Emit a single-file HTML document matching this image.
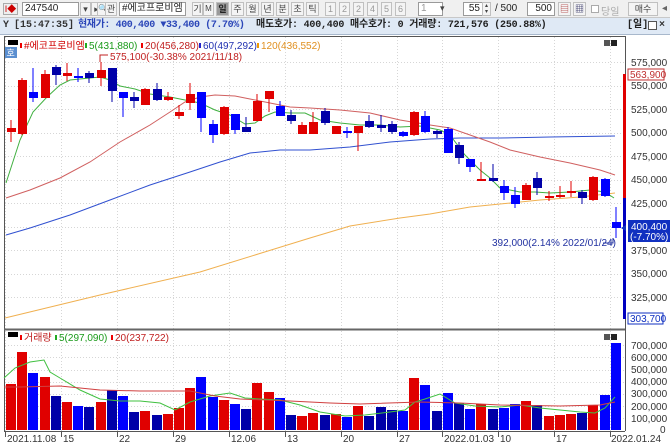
<!DOCTYPE html>
<html><head><meta charset="utf-8">
<style>
*{margin:0;padding:0;box-sizing:border-box}
body{width:670px;height:446px;overflow:hidden;background:#fff;font-family:"Liberation Sans","Noto Sans CJK KR",sans-serif;position:relative}
.a{position:absolute;white-space:nowrap}
#tb{position:absolute;left:0;top:0;width:670px;height:18px;background:#f0f0f0;border-bottom:1px solid #c8c8c8}
#st{position:absolute;left:0;top:18px;width:670px;height:17px;background:#dfe9f5;border-bottom:1px solid #a8b8cc;font-family:"Liberation Mono","Noto Sans CJK KR",monospace;font-size:10px;font-weight:bold;line-height:16px}
.box{position:absolute;top:2px;height:14px;background:#fff;border:1px solid #9a9a9a;font-size:10px;line-height:12px;padding-left:2px;color:#222}
.btn{position:absolute;top:2px;height:14px;width:11px;border:1px solid #c0c0c0;background:#f4f4f4;font-size:9px;line-height:12px;text-align:center;color:#444}
svg text{font-family:"Liberation Sans","Noto Sans CJK KR",sans-serif}
</style></head><body>
<div id="tb">
 <div class="a" style="left:3px;top:3px;width:15px;height:12px;border:1px solid #aaa;background:#eee;font-size:9px;line-height:10px;text-align:center;color:#c00">I◆</div>
 <div class="box" style="left:22px;width:57px">247540</div>
 <div class="btn" style="left:80px">▾</div>
 <div class="btn" style="left:91px">▸</div>
 <div class="btn" style="left:97px;width:9px;font-size:8px">🔍</div>
 <div class="btn" style="left:105px;width:12px">관</div>
 <div class="box" style="left:119px;width:67px">#에코프로비엠</div>
 <div class="btn" style="left:192px">기</div>
 <div class="btn" style="left:203px;font-size:8px">M</div>
 <div class="btn" style="left:216px;width:13px;background:#9a9a9a;color:#222;font-weight:bold">일</div>
 <div class="btn" style="left:231px;width:13px">주</div>
 <div class="btn" style="left:246px;width:13px">월</div>
 <div class="btn" style="left:261px;width:13px">년</div>
 <div class="btn" style="left:276px;width:13px">분</div>
 <div class="btn" style="left:291px;width:13px">초</div>
 <div class="btn" style="left:306px;width:13px">틱</div>
 <div class="btn" style="left:325px;color:#999">1</div>
 <div class="btn" style="left:339px;color:#999">2</div>
 <div class="btn" style="left:353px;color:#999">2</div>
 <div class="btn" style="left:367px;color:#999">4</div>
 <div class="btn" style="left:381px;color:#999">5</div>
 <div class="btn" style="left:395px;color:#999">6</div>
 <div class="box" style="left:418px;width:25px;color:#999">1</div>
 <div class="a" style="left:440px;top:3px;font-size:9px;color:#444">▾</div>
 <div class="box" style="left:463px;width:20px;text-align:right;padding-right:2px">55</div>
 <div class="btn" style="left:482px;width:9px;font-size:6px;line-height:6px">▴<br>▾</div>
 <div class="a" style="left:495px;top:3px;font-size:10px;color:#222">/ 500</div>
 <div class="box" style="left:527px;width:28px;text-align:right;padding-right:2px">500</div>
 <div class="btn" style="left:558px;width:13px;color:#a33">▤</div>
 <div class="btn" style="left:573px;width:13px;color:#336">▦</div>
 <div class="a" style="left:591px;top:5px;width:8px;height:8px;border:1px solid #aaa;background:#fff"></div>
 <div class="a" style="left:601px;top:3px;font-size:10px;color:#aaa">당일</div>
 <div class="btn" style="left:628px;width:30px">매수</div>
 <div class="a" style="left:662px;top:3px;font-size:10px;color:#666">◂</div>
</div>
<div id="st">
 <span class="a" style="left:3px;color:#333">Y</span>
 <span class="a" style="left:14px;color:#333">[15:47:35]</span>
 <span class="a" style="left:78px;color:#2b46b8;letter-spacing:-0.4px">현재가: 400,400 ▼33,400 (7.70%)</span>
 <span class="a" style="left:256px;color:#222;letter-spacing:-0.2px">매도호가: 400,400 매수호가: 0 거래량: 721,576 (250.88%)</span>
 <span class="a" style="left:627px;color:#222">[일]</span>
 <span class="a" style="left:648px;top:3px;width:9px;height:9px;border:1px solid #555;background:#fff"></span>
 <span class="a" style="left:659px;color:#333;font-size:10px">×</span>
</div>
<svg id="c" class="a" style="left:0;top:0" width="670" height="446" xmlns="http://www.w3.org/2000/svg">
 <g id="grid" stroke="#d6d6d6" stroke-dasharray="1,2" stroke-width="1"></g>
 <line x1="4.5" y1="36" x2="4.5" y2="431" stroke="#555"/>
 <line x1="4" y1="36.5" x2="625" y2="36.5" stroke="#555"/>
 <line x1="625.5" y1="36" x2="625.5" y2="431" stroke="#555"/>
 <line x1="4" y1="329.5" x2="625" y2="329.5" stroke="#666" stroke-width="2"/>
 <line x1="4" y1="431.5" x2="625" y2="431.5" stroke="#555"/>
 <g id="ma"></g>
 <g id="cd"></g>
 <g id="vol"></g>
 <rect x="623" y="74" width="3" height="124" fill="#e00000"/>
 <rect x="623" y="198" width="3" height="121" fill="#0000c0"/>
 <rect x="8" y="40" width="10" height="5" fill="#000"/>
 <rect x="5" y="47" width="12" height="11" fill="#5b8fd0"/>
 <text x="6.5" y="56" font-size="9" fill="#fff">호</text>
 <g font-size="10">
  <rect x="20" y="43" width="2" height="5" fill="#e00"/><text x="24" y="49" fill="#d00000">#에코프로비엠</text>
  <rect x="85" y="43" width="2" height="5" fill="#2a2"/><text x="89" y="49" fill="#1a9a1a">5(431,880)</text>
  <rect x="141" y="43" width="2" height="5" fill="#e00"/><text x="145" y="49" fill="#c02020">20(456,280)</text>
  <rect x="199" y="43" width="2" height="5" fill="#22c"/><text x="203" y="49" fill="#2030b0">60(497,292)</text>
  <rect x="257" y="43" width="2" height="5" fill="#e90"/><text x="261" y="49" fill="#e09020">120(436,552)</text>
  <text x="110" y="60" fill="#c02020">575,100(-30.38% 2021/11/18)</text>
  <text x="492" y="246" fill="#2030a0">392,000(2.14% 2022/01/24)</text>
 </g>
 <path d="M100 62V55H108" stroke="#c02020" fill="none"/>
 <path d="M603 243H613V238" stroke="#2030a0" fill="none"/>
 <rect x="604" y="40" width="6" height="6" fill="#555"/><rect x="611" y="40" width="6" height="6" fill="#222"/>
 <rect x="604" y="334" width="6" height="6" fill="#555"/><rect x="611" y="334" width="6" height="6" fill="#222"/>
 <g font-size="10" fill="#333">
  <text x="631" y="66">575,000</text>
  <text x="631" y="89">550,000</text>
  <text x="631" y="113">525,000</text>
  <text x="631" y="136">500,000</text>
  <text x="631" y="160">475,000</text>
  <text x="631" y="183">450,000</text>
  <text x="631" y="207">425,000</text>
  <text x="631" y="254">375,000</text>
  <text x="631" y="277">350,000</text>
  <text x="631" y="301">325,000</text>
 </g>
 <rect x="628" y="69" width="36" height="11" fill="#fff" stroke="#c03030"/>
 <text x="630" y="78" font-size="10" fill="#c03030">563,900</text>
 <rect x="628" y="220" width="42" height="22" fill="#1030c0"/>
 <path d="M621 228L626 225V231Z" fill="#1030c0"/>
 <text x="631" y="230" font-size="10" fill="#fff">400,400</text>
 <text x="630" y="240" font-size="10" fill="#fff">(-7.70%)</text>
 <rect x="628" y="313" width="35" height="11" fill="#fff" stroke="#1030c0"/>
 <text x="630" y="322" font-size="10" fill="#1030c0">303,700</text>
 <rect x="8" y="332" width="10" height="5" fill="#000"/>
 <g font-size="10">
  <rect x="20" y="335" width="2" height="5" fill="#e00"/><text x="24" y="341" fill="#c02020">거래량</text>
  <rect x="55" y="335" width="2" height="5" fill="#2a2"/><text x="59" y="341" fill="#1a9a1a">5(297,090)</text>
  <rect x="111" y="335" width="2" height="5" fill="#e00"/><text x="115" y="341" fill="#c02020">20(237,722)</text>
 </g>
 <g font-size="10" fill="#333">
  <text x="631" y="349">700,000</text>
  <text x="631" y="361">600,000</text>
  <text x="631" y="373">500,000</text>
  <text x="631" y="385">400,000</text>
  <text x="631" y="397">300,000</text>
  <text x="631" y="410">200,000</text>
  <text x="631" y="422">100,000</text>
  <text x="660" y="433">0</text>
 </g>
 <g font-size="10" fill="#333">
  <text x="7" y="442">2021.11.08</text>
  <text x="63" y="442">15</text>
  <text x="119" y="442">22</text>
  <text x="175" y="442">29</text>
  <text x="231" y="442">12.06</text>
  <text x="287" y="442">13</text>
  <text x="343" y="442">20</text>
  <text x="399" y="442">27</text>
  <text x="444" y="442">2022.01.03</text>
  <text x="500" y="442">10</text>
  <text x="556" y="442">17</text>
  <text x="611" y="442">2022.01.24</text>
 </g>
</svg>
<script>
var NS="http://www.w3.org/2000/svg";
function el(p,t,a){var e=document.createElementNS(NS,t);for(var k in a)e.setAttribute(k,a[k]);document.getElementById(p).appendChild(e);return e;}
function X(i){return 11+11.2*i;}
for(var k=0;k<11;k++){var y=Math.round(62+23.5*k)+0.5;el("grid","line",{x1:5,x2:625,y1:y,y2:y});}
for(k=1;k<8;k++){var y=Math.round(430-12.1*k)+0.5;el("grid","line",{x1:5,x2:625,y1:y,y2:y});}
[0,5,10,15,20,25,30,35,39,44,49,54].forEach(function(i){var x=Math.round(X(i)-6)+0.5;el("grid","line",{x1:x,x2:x,y1:37,y2:329});el("grid","line",{x1:x,x2:x,y1:331,y2:431});
 el("grid","line",{x1:x,x2:x,y1:432,y2:437,stroke:"#555","stroke-dasharray":"none"});});
var col="rrbrnrbnrnbnrnrrrbbrbnrrbnrrnrbrnnnbrbnbnbrnbbrnrrrnrbb";
var C={r:"#e00000",b:"#0000ff",n:"#0000a8"};
var cd=[[128,132,120,142],[80,134,78,135],[92,98,68,102],[74,98,70,98],[67,75,65,85],[73,76,63,81],[76,78,68,82],[73,78,71,83],[70,78,62,86],[68,91,68,102],[92,98,92,117],[97,101,92,108],[89,105,88,105],[89,100,83,101],[97,100,92,101],[112,116,105,119],[94,103,83,110],[92,118,92,132],[124,135,120,143],[107,134,106,135],[114,130,114,134],[127,132,117,132],[101,121,94,121],[91,99,91,112],[106,116,101,116],[115,121,110,124],[125,134,122,134],[122,134,112,134],[111,123,108,125],[126,134,126,134],[131,133,127,138],[126,133,126,151],[121,127,115,128],[125,128,115,132],[124,132,121,134],[132,136,131,137],[112,135,111,136],[116,132,111,133],[131,134,130,138],[129,153,127,153],[145,158,142,164],[159,167,159,172],[179,181,162,181],[178,181,164,182],[186,193,180,200],[195,204,187,208],[185,200,183,200],[178,188,172,195],[196,198,191,201],[195,197,186,198],[191,192,181,197],[192,198,190,204],[177,200,176,201],[179,196,178,197],[222,228,207,238]];
var vt=[384,352,373,377,396,402,406,407,402,390,396,412,411,415,414,408,388,377,397,400,404,409,383,392,398,415,416,413,415,414,417,406,416,407,410,411,378,385,411,393,403,409,404,409,408,404,401,405,416,415,414,413,405,395,343];
function poly(g,pts,c){el(g,"polyline",{points:pts,fill:"none",stroke:c,"stroke-width":1});}
poly("ma","5,318 100,295 200,272 310,238 350,226 400,218 430,214 470,207 500,204 540,200 580,197 615,193","#f0b050");
poly("ma","6,235 30,228 70,215 110,200 150,185 190,172 220,162 250,153 280,150 310,150 350,147 390,142 430,139 460,138 500,138 550,137 615,136","#3050d0");
poly("ma","6,198 30,190 60,178 90,162 120,142 150,125 170,112 185,102 200,97 215,95 235,96 250,99 270,103 290,107 310,108 340,110 370,113 400,120 430,125 450,128 470,135 490,142 510,150 540,157 570,163 600,170 615,175","#d06060");
poly("ma","6,183 20,140 33,112 47,97 60,85 70,80 80,79 100,77 110,80 120,86 135,89 150,94 170,97 185,100 200,103 215,110 230,115 245,124 255,123 265,116 275,112 290,113 305,113 320,120 340,123 360,125 380,125 400,127 420,126 440,130 450,135 465,155 480,170 490,178 500,188 510,190 520,192 535,192 550,193 570,192 590,190 605,192 614,198","#40b040");
for(var i=0;i<55;i++){var c=C[col[i]],x=X(i),d=cd[i];
 el("cd","rect",{x:Math.round(x)-0.5,y:d[2],width:1,height:d[3]-d[2],fill:c});
 el("cd","rect",{x:Math.round(x)-4,y:d[0],width:9,height:Math.max(2,d[1]-d[0]),fill:c});
 el("vol","rect",{x:Math.round(x)-5,y:vt[i],width:10,height:430-vt[i],fill:c});}
poly("vol","4,378 15,368 30,362 44,360 50,372 60,378 80,390 100,399 120,401 140,401 160,403 175,410 190,402 210,396 230,393 245,398 260,399 280,400 300,405 320,412 345,416 365,415 390,412 405,410 415,402 425,399 440,394 455,403 475,406 500,407 520,405 540,408 560,410 580,412 595,413 605,408 615,397","#40c040");
poly("vol","4,387 20,387 60,386 100,390 140,391 190,391 215,396 240,399 290,401 330,403 360,404 420,402 460,403 500,405 560,406 600,405 615,402","#d04040");
</script>
</body></html>
